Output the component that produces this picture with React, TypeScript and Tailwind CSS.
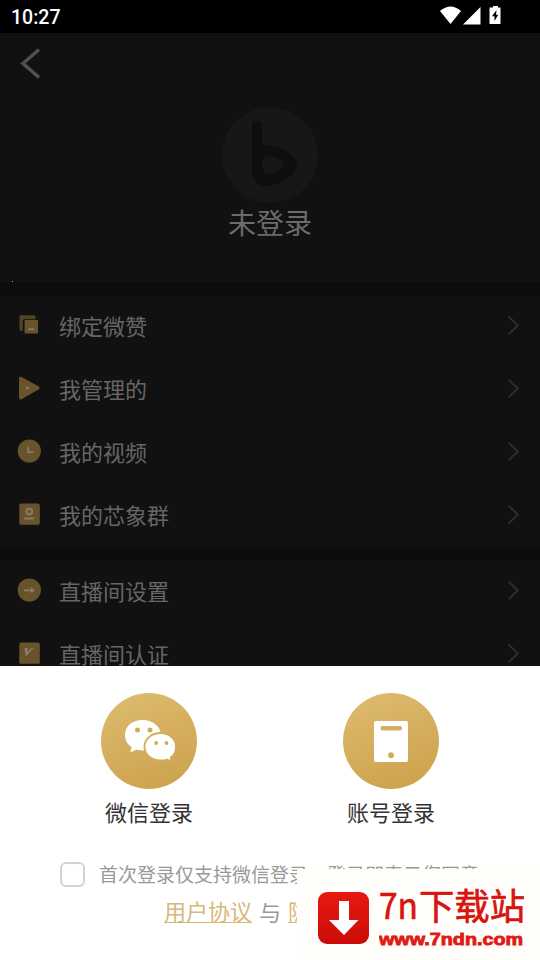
import type { ReactNode } from "react";

type Row = { label: string; icon: ReactNode };

const GOLD = "#69532d";
const MARK = "#8b7f68";

const accountRows: Row[] = [
  {
    label: "绑定微赞",
    icon: (
      <svg viewBox="0 0 24 24" className="size-6">
        <path d="M4 2.200h13q1.500 0 1.500 1.500v2.600H8q-2.200 0-2.200 2.200V18H4.500Q2.500 18 2.500 16V3.700Q2.500 2.200 4 2.200z" fill="#554424" />
        <rect x="7.500" y="7" width="13.500" height="13.500" rx="1" fill={GOLD} />
        <rect x="11.500" y="15.300" width="5.500" height="1.800" fill={MARK} />
      </svg>
    ),
  },
  {
    label: "我管理的",
    icon: (
      <svg viewBox="0 0 24 24" className="size-6">
        <path d="M4.500 1 21.500 10.200q2.400 1.600 0 3.200L5 23Q2 24.500 2 21.500V2.500Q2-.200 4.500 1z" fill={GOLD} />
        <path d="m8.500 14.500 1-3 2-1.200.700 2.500-2 .300z" fill={MARK} />
      </svg>
    ),
  },
  {
    label: "我的视频",
    icon: (
      <svg viewBox="0 0 24 24" className="size-6">
        <circle cx="12.300" cy="12" r="11.600" fill={GOLD} />
        <path d="M11.200 8v5.200h5.600" fill="none" stroke={MARK} strokeWidth="1.600" />
      </svg>
    ),
  },
  {
    label: "我的芯象群",
    icon: (
      <svg viewBox="0 0 24 24" className="size-6">
        <rect x="2.300" y="1.500" width="20.500" height="21.300" rx="2" fill={GOLD} />
        <circle cx="12.300" cy="9.500" r="2.900" fill="none" stroke={MARK} strokeWidth="1.800" />
        <path d="M7.200 16.500h10" stroke={MARK} strokeWidth="1.800" />
      </svg>
    ),
  },
];

const roomRows: Row[] = [
  {
    label: "直播间设置",
    icon: (
      <svg viewBox="0 0 24 24" className="size-6">
        <circle cx="12.300" cy="12" r="11.600" fill={GOLD} />
        <path d="M7 11.500h7V9.300l4 3.200-4 2.500v-1.700H7z" fill={MARK} />
      </svg>
    ),
  },
  {
    label: "直播间认证",
    icon: (
      <svg viewBox="0 0 24 24" className="size-6">
        <rect x="2.300" y="1.500" width="20.500" height="21.300" rx="1.500" fill={GOLD} />
        <path d="M7.500 7h3l.300 3.800 4-3.800h1.700L9 15.500z" fill={MARK} />
      </svg>
    ),
  },
];

const StatusBar = () => (
  <div className="flex h-[33px] shrink-0 items-center justify-between bg-black pl-[11px] pr-[38px] text-white">
    <span className="mt-[3px] font-[Roboto,sans-serif] text-[19.500px] font-medium leading-none">10:27</span>
    <svg viewBox="0 0 62 20" className="-mt-[3px] h-5 w-[62px]">
      <path d="M0 6Q10.500-3 21 6L10.500 19z" fill="#fff" />
      <path d="M40.500 2v17.500H23z" fill="#fff" />
      <path d="M53 1h5v1.500h2.500V19h-11V2.500H53z" fill="#fff" />
      <path d="m56.500 5-4.500 6.200h2.500V16l3.700-6.200H56z" fill="#000" />
    </svg>
  </div>
);

const MenuRow = ({ label, icon }: Row) => (
  <div className="flex h-[63px] shrink-0 items-center pb-[5px] pl-[17px] pr-[21px]">
    {icon}
    <span className="ml-[18px] flex-1 text-[22px] leading-none text-[#666]">{label}</span>
    <svg viewBox="0 0 11 19" className="h-[19px] w-[11px]" fill="none" stroke="#2d2d2d" strokeWidth="2">
      <path d="m.700.700 9 8.800-9 8.800" />
    </svg>
  </div>
);

const LoginOption = ({ label, children }: { label: string; children: ReactNode }) => (
  <div className="flex w-[242px] flex-col items-center">
    <div className="flex size-24 items-center justify-center rounded-full bg-linear-160 from-[#debc70] to-[#cba04a]">
      {children}
    </div>
    <span className="mt-[10px] text-[22px] leading-[24px] text-[#333]">{label}</span>
  </div>
);

const LoginSheet = () => (
  <div className="flex h-[294px] shrink-0 flex-col items-center bg-white pt-[27px]">
    <div className="flex">
      <LoginOption label="微信登录">
        <svg viewBox="0 0 96 96" className="size-24">
          <path d="M41.500 27C31 27 24 33.500 24 42c0 5 2 9 6.500 12l-1 5.500 6-3c9 2.500 24 1 24.500-14C60 33.500 52 27 41.500 27z" fill="#fff" />
          <path d="M59.500 40c-9 0-16 6-16 13.700S50.500 67.500 59.500 67.500q4 0 6.500-1l4.200 2-.500-4c3.500-2.500 5.300-6 5.300-10.800 0-7.700-6.500-13.700-15.500-13.700z" fill="#fff" stroke="#d4ad5c" strokeWidth="1.800" />
          <circle cx="36.500" cy="37" r="2.500" fill="#d1aa58" />
          <circle cx="49" cy="37" r="2.500" fill="#d1aa58" />
          <circle cx="55.200" cy="50" r="1.900" fill="#d1aa58" />
          <circle cx="65.500" cy="50" r="1.900" fill="#d1aa58" />
        </svg>
      </LoginOption>
      <LoginOption label="账号登录">
        <svg viewBox="0 0 96 96" className="size-24">
          <rect x="31" y="28" width="34" height="41" rx="2" fill="#fff" />
          <rect x="37.500" y="33" width="21.500" height="4.500" rx="2" fill="#d5b062" />
          <circle cx="48" cy="62.200" r="2.900" fill="#d1aa58" />
        </svg>
      </LoginOption>
    </div>
    <div className="mt-[37px] flex h-[28px] w-full items-center pl-[60px]">
      <span className="size-[25px] rounded-md border-2 border-[#d2d2d2]" />
      <span className="-mt-px ml-[14px] whitespace-nowrap text-[19px] leading-none text-[#999]">
        首次登录仅支持微信登录，登录即表示您同意
      </span>
    </div>
    <div className="mt-[10px] flex items-center gap-[7px]">
      <span className="border-b border-[#d6b878] text-[22px] leading-[24px] text-[#d6b878]">用户协议</span>
      <span className="text-[22px] leading-[24px] text-[#999]">与</span>
      <span className="border-b border-[#d6b878] text-[22px] leading-[24px] text-[#d6b878]">隐私政策</span>
    </div>
  </div>
);

const DownloadBadge = () => (
  <div className="absolute bottom-0 right-0 flex h-[91px] w-[243px] items-start bg-[#fffefb] pl-[21px] pt-[23px]">
    <div className="flex h-[52px] w-[51px] items-center justify-center rounded-[9px] bg-linear-to-b from-[#e71912] to-[#cb0b08]">
      <svg viewBox="0 0 30 34" className="h-[34px] w-[30px]">
        <path d="M10 0h10v19h9.500L15 34 0 19h10z" fill="#fff" />
      </svg>
    </div>
    <div className="-mt-[5px] ml-[10px] flex flex-col">
      <svg viewBox="0 0 150 38" className="h-[38px] w-[150px]" fill="#d81411" stroke="#d81411" strokeWidth="0.700">
        <text x="0" y="32" textLength="39" lengthAdjust="spacingAndGlyphs" className="text-[37px]">
          7n
        </text>
        <text x="40" y="33" textLength="106" lengthAdjust="spacingAndGlyphs" className="text-[36px]">
          下载站
        </text>
      </svg>
      <svg viewBox="0 0 146 20" className="mt-[4px] h-5 w-[146px]">
        <text
          x="0"
          y="15.500"
          textLength="144"
          lengthAdjust="spacingAndGlyphs"
          fill="#e01a14"
          stroke="#e01a14"
          strokeWidth="0.900"
          className="font-['Liberation_Sans',sans-serif] text-[17px] font-bold"
        >
          www.7ndn.com
        </text>
      </svg>
    </div>
  </div>
);

export default function App() {
  return (
    <div className="relative flex h-[960px] w-[540px] flex-col overflow-hidden bg-[#111] font-['Noto_Sans_CJK_SC',sans-serif]">
      <StatusBar />
      <div className="flex min-h-0 flex-1 flex-col overflow-hidden">
        <div className="flex h-[249px] shrink-0 flex-col items-center">
          <div className="h-[74px] w-full pl-5 pt-[15px]">
            <svg viewBox="0 0 20 31" className="h-[31px] w-5" fill="none" stroke="#505050" strokeWidth="3.500">
              <path d="M19 1.500 3 15.500l16 14" />
            </svg>
          </div>
          <svg viewBox="0 0 96 96" className="size-24">
            <circle cx="48" cy="48" r="48" fill="#171717" />
            <path
              d="M30 16q0-2 3-2h3q4 0 4 4v20c14-1 35 8 35 20S52 80 42 79c-7 0-11-6-12-17zM48 49c-5 0-8 3-8 8s2 9 7 10c5 0 15-5 15-9s-8-9-14-9z"
              fill="#0e0e0e"
              fillRule="evenodd"
            />
          </svg>
          <span className="mt-[3px] text-[28px] leading-8 text-[#6b6b6b]">未登录</span>
          <span className="ml-3 mt-[43px] size-px shrink-0 self-start bg-[#999]" />
        </div>
        <div className="h-[14px] shrink-0 bg-[#0d0d0d]" />
        {accountRows.map((row) => (
          <MenuRow key={row.label} {...row} />
        ))}
        <div className="h-[13px] shrink-0 bg-[#0d0d0d]" />
        {roomRows.map((row) => (
          <MenuRow key={row.label} {...row} />
        ))}
      </div>
      <LoginSheet />
      <DownloadBadge />
    </div>
  );
}
